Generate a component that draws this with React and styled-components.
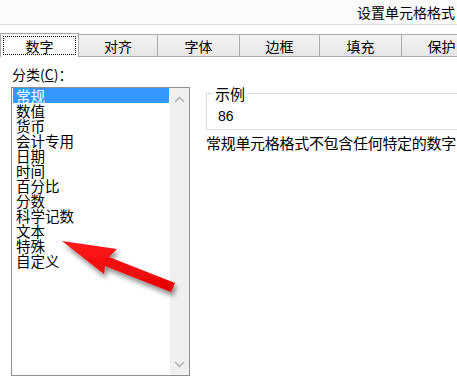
import React, { useState } from 'react';
import styled, { createGlobalStyle } from 'styled-components';

const GlobalStyle = createGlobalStyle`
  html, body {
    margin: 0;
    padding: 0;
    background: #ffffff;
  }
  body {
    font-family: "Noto Sans CJK SC", "Liberation Sans", sans-serif;
    color: #000000;
  }
`;

const Dialog = styled.div`
  position: relative;
  width: 457px;
  height: 392px;
  overflow: hidden;
  background: #ffffff;
`;

const TitleBar = styled.div`
  height: 24px;
  background: #fbfbfb;
  border-bottom: 1px solid #dcdcdc;
  display: flex;
  justify-content: flex-end;
  align-items: center;
  padding-right: 2px;
  font-size: 14px;
  line-height: 22px;
  white-space: nowrap;
`;

const TabStrip = styled.div`
  display: flex;
  align-items: flex-end;
  margin-top: 8px;
  height: 24px;
`;

const Tab = styled.div`
  flex: none;
  box-sizing: border-box;
  width: ${(p) => p.$width}px;
  height: ${(p) => (p.$active ? 24 : 23)}px;
  border: 1px solid #acacac;
  border-left: ${(p) => (p.$first ? '1px solid #acacac' : 'none')};
  border-bottom: ${(p) => (p.$active ? 'none' : '1px solid #acacac')};
  background: ${(p) =>
    p.$active ? '#ffffff' : 'linear-gradient(#f3f3f3, #e6e6e6)'};
  display: flex;
  align-items: center;
  justify-content: center;
  font-size: 14px;
  line-height: 16px;
  padding: ${(p) => (p.$active ? '2px' : '0')};
`;

const Focus = styled.div`
  box-sizing: border-box;
  width: 100%;
  height: 100%;
  border: 1px dotted #000000;
  display: flex;
  align-items: center;
  justify-content: center;
`;

const Body = styled.div`
  display: flex;
  gap: 16px;
  padding-left: 11px;
  padding-top: 10px;
`;

const LeftCol = styled.div`
  display: flex;
  flex-direction: column;
  flex: none;
`;

const Label = styled.div`
  font-size: 14px;
  line-height: 15px;
  padding-left: 1px;
  margin-bottom: 5px;
  u {
    text-decoration: underline;
  }
`;

const ListBox = styled.div`
  box-sizing: border-box;
  width: 179px;
  height: 289px;
  border: 1px solid #8e8f8f;
  display: flex;
`;

const Items = styled.div`
  flex: 1;
  display: flex;
  flex-direction: column;
  padding: 0 1px;
`;

const Item = styled.div`
  height: 15px;
  line-height: 15px;
  font-size: 14.5px;
  padding-left: 3px;
  white-space: nowrap;
  background: ${(p) => (p.$selected ? '#3399ff' : 'transparent')};
  color: ${(p) => (p.$selected ? '#ffffff' : '#000000')};
`;

const ScrollBar = styled.div`
  width: 19px;
  background: #f0f0f0;
  display: flex;
  flex-direction: column;
  justify-content: space-between;
  align-items: center;
  padding: 8px 0 7px;
`;

const RightCol = styled.div`
  display: flex;
  flex-direction: column;
  flex: none;
  width: 260px;
  padding-top: 19px;
`;

const GroupBox = styled.fieldset`
  margin: 0;
  padding: 8px 0 5px 11px;
  border: 1px solid #dcdcdc;
  border-right: none;
  min-width: 0;
`;

const Legend = styled.legend`
  font-size: 15px;
  line-height: 15px;
  padding: 0 2px;
  margin-left: -5px;
`;

const Sample = styled.div`
  font-family: "Liberation Sans", sans-serif;
  font-size: 14px;
  line-height: 15px;
`;

const Description = styled.div`
  margin-top: 5px;
  font-size: 15px;
  letter-spacing: -0.3px;
  line-height: 16px;
  white-space: nowrap;
`;

const Overlay = styled.svg`
  position: absolute;
  left: 0;
  top: 0;
  pointer-events: none;
`;

const Chevron = ({ up }) => (
  <svg width="11" height="7" viewBox="0 0 11 7">
    <path
      d={up ? 'M1 6 L5.5 1.5 L10 6' : 'M1 1 L5.5 5.5 L10 1'}
      fill="none"
      stroke="#b4b4b4"
      strokeWidth="1.6"
    />
  </svg>
);

const tabs = [
  { name: '数字', width: 79 },
  { name: '对齐', width: 79 },
  { name: '字体', width: 82 },
  { name: '边框', width: 80 },
  { name: '填充', width: 82 },
  { name: '保护', width: 80 },
];

const categories = [
  '常规',
  '数值',
  '货币',
  '会计专用',
  '日期',
  '时间',
  '百分比',
  '分数',
  '科学记数',
  '文本',
  '特殊',
  '自定义',
];

const App = () => {
  const [active] = useState(0);
  const [selected, setSelected] = useState(0);

  return (
    <Dialog>
      <GlobalStyle />
      <TitleBar>设置单元格格式</TitleBar>
      <TabStrip>
        {tabs.map((t, i) => (
          <Tab key={t.name} $width={t.width} $active={i === active} $first={i === 0}>
            {i === active ? <Focus>{t.name}</Focus> : t.name}
          </Tab>
        ))}
      </TabStrip>
      <Body>
        <LeftCol>
          <Label>
            分类(<u>C</u>)：
          </Label>
          <ListBox>
            <Items>
              {categories.map((c, i) => (
                <Item key={c} $selected={i === selected} onClick={() => setSelected(i)}>
                  {c}
                </Item>
              ))}
            </Items>
            <ScrollBar>
              <Chevron up />
              <Chevron />
            </ScrollBar>
          </ListBox>
        </LeftCol>
        <RightCol>
          <GroupBox>
            <Legend>示例</Legend>
            <Sample>86</Sample>
          </GroupBox>
          <Description>常规单元格格式不包含任何特定的数字</Description>
        </RightCol>
      </Body>
      <Overlay width="457" height="392" viewBox="0 0 457 392">
        <defs>
          <filter id="shadow" x="-20%" y="-20%" width="150%" height="160%">
            <feDropShadow dx="2" dy="4" stdDeviation="2.5" floodColor="#000" floodOpacity="0.45" />
          </filter>
          <linearGradient id="red" x1="0" y1="0" x2="0" y2="1">
            <stop offset="0" stopColor="#ff1a1a" />
            <stop offset="1" stopColor="#e60000" />
          </linearGradient>
        </defs>
        <path
          d="M62 241 L117 249 L109 257 L175 283 L171 292 L105 266 L104 274 Z"
          fill="url(#red)"
          filter="url(#shadow)"
        />
      </Overlay>
    </Dialog>
  );
};

export default App;
